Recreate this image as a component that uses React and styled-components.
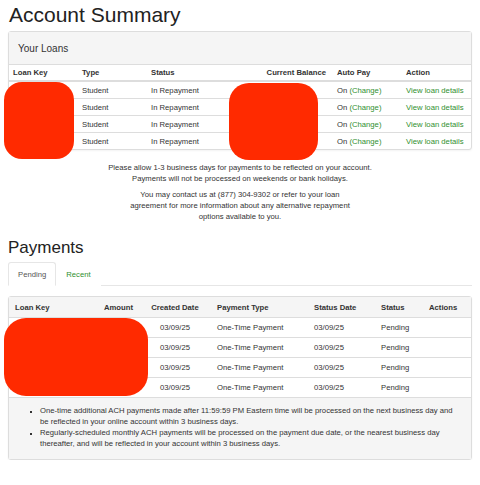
import React from 'react';
import styled, { createGlobalStyle } from 'styled-components';

const GlobalStyle = createGlobalStyle`
  body {
    margin: 0;
    background: #fff;
    font-family: "Liberation Sans", Arial, Helvetica, sans-serif;
    color: #333;
  }
`;

const Page = styled.div`
  width: 464px;
  padding: 3px 8px 0 8px;
`;

const Title = styled.h1`
  margin: 0 0 4px 1px;
  font-size: 21px;
  line-height: 24px;
  font-weight: 400;
  color: #222;
`;

const Panel = styled.div`
  position: relative;
  border: 1px solid #ddd;
  border-radius: 3px;
  background: #fff;
  box-shadow: 0 1px 2px rgba(0, 0, 0, 0.05);
`;

const PanelHeader = styled.div`
  height: 32px;
  display: flex;
  align-items: center;
  padding: 0 9px;
  background: #f5f5f5;
  border-bottom: 1px solid #ddd;
  font-size: 10px;
  color: #333;
`;

const Table = styled.table`
  width: 100%;
  border-collapse: collapse;
  table-layout: fixed;
  font-size: 7.7px;
`;

const Th = styled.th`
  height: ${(p) => p.$h || 15}px;
  padding: 0 ${(p) => p.$pr || 4}px 0 ${(p) => p.$pl || 4}px;
  text-align: ${(p) => p.$align || 'left'};
  font-weight: 700;
  color: #333;
  background: ${(p) => p.$bg || 'transparent'};
  border-bottom: ${(p) => p.$bb || 2}px solid #ddd;
  white-space: nowrap;
`;

const Td = styled.td`
  height: ${(p) => p.$h || 16}px;
  padding: 0 ${(p) => p.$pr || 4}px 0 ${(p) => p.$pl || 4}px;
  text-align: ${(p) => p.$align || 'left'};
  border-top: 1px solid #ddd;
  color: #333;
  white-space: nowrap;
`;

const Link = styled.a`
  color: #2f8f2f;
  text-decoration: none;
  cursor: pointer;
`;

const Note = styled.p`
  margin: ${(p) => p.$mt || 0}px auto 0 auto;
  max-width: ${(p) => p.$w}px;
  text-align: center;
  font-size: 7.7px;
  line-height: 11.3px;
  color: #333;
`;

const Heading = styled.h2`
  margin: 16px 0 4px 0;
  font-size: 17px;
  line-height: 20px;
  font-weight: 400;
  color: #222;
`;

const Tabs = styled.div`
  display: flex;
  border-bottom: 1px solid #e6e6e6;
  margin-bottom: 10px;
`;

const Tab = styled.div`
  height: 22px;
  display: flex;
  align-items: center;
  padding: 0 9px;
  margin-bottom: -1px;
  font-size: 7.7px;
  color: ${(p) => (p.$active ? '#555' : '#2f8f2f')};
  background: #fff;
  border: 1px solid ${(p) => (p.$active ? '#e6e6e6' : 'transparent')};
  border-bottom-color: ${(p) => (p.$active ? '#fff' : 'transparent')};
  border-radius: 3px 3px 0 0;
`;

const Footer = styled.div`
  background: #f5f5f5;
  border-top: 1px solid #ddd;
  padding: 7px 10px 10px 10px;
`;

const Bullets = styled.ul`
  margin: 0;
  padding-left: 21px;
  font-size: 7.7px;
  line-height: 11px;
  color: #333;
  list-style: square;
  li {
    line-height: 11px;
  }
  li::marker {
    font-size: 6px;
  }
`;

const Redact = styled.div`
  position: absolute;
  left: ${(p) => p.$x}px;
  top: ${(p) => p.$y}px;
  width: ${(p) => p.$w}px;
  height: ${(p) => p.$h}px;
  border-radius: ${(p) => p.$r}px;
  background: #ff2a00;
  filter: blur(0.4px);
`;

const loans = [1, 2, 3, 4];
const payments = [1, 2, 3, 4];

export default function App() {
  return (
    <>
      <GlobalStyle />
      <Page>
        <Title>Account Summary</Title>
        <Panel>
          <PanelHeader>Your Loans</PanelHeader>
          <Table>
            <colgroup>
              <col style={{ width: 69 }} />
              <col style={{ width: 69 }} />
              <col style={{ width: 69 }} />
              <col style={{ width: 117 }} />
              <col style={{ width: 69 }} />
              <col />
            </colgroup>
            <thead>
              <tr>
                <Th>Loan Key</Th>
                <Th>Type</Th>
                <Th>Status</Th>
                <Th $align="right" $pr={7}>Current Balance</Th>
                <Th>Auto Pay</Th>
                <Th>Action</Th>
              </tr>
            </thead>
            <tbody>
              {loans.map((n) => (
                <tr key={n}>
                  <Td></Td>
                  <Td>Student</Td>
                  <Td>In Repayment</Td>
                  <Td $align="right" $pr={7}></Td>
                  <Td>
                    On <Link>(Change)</Link>
                  </Td>
                  <Td>
                    <Link>View loan details</Link>
                  </Td>
                </tr>
              ))}
            </tbody>
          </Table>
          <Redact $x={-5} $y={50} $w={70} $h={77} $r={18} />
          <Redact $x={220} $y={51} $w={89} $h={77} $r={20} />
        </Panel>

        <Note $mt={12} $w={300}>
          Please allow 1-3 business days for payments to be reflected on your account.
          <br />
          Payments will not be processed on weekends or bank holidays.
        </Note>
        <Note $mt={4} $w={224}>
          You may contact us at (877) 304-9302 or refer to your loan agreement for more
          information about any alternative repayment options available to you.
        </Note>

        <Heading>Payments</Heading>
        <Tabs>
          <Tab $active>Pending</Tab>
          <Tab>Recent</Tab>
        </Tabs>

        <Panel>
          <Table>
            <colgroup>
              <col style={{ width: 62 }} />
              <col style={{ width: 68 }} />
              <col style={{ width: 72 }} />
              <col style={{ width: 97 }} />
              <col style={{ width: 67 }} />
              <col style={{ width: 48 }} />
              <col />
            </colgroup>
            <thead>
              <tr>
                <Th $h={20} $bb={1} $bg="#f5f5f5" $pl={6}>Loan Key</Th>
                <Th $h={20} $bb={1} $bg="#f5f5f5" $align="right" $pr={6}>Amount</Th>
                <Th $h={20} $bb={1} $bg="#f5f5f5" $align="center" $pl={0} $pr={0}>Created Date</Th>
                <Th $h={20} $bb={1} $bg="#f5f5f5" $pl={6}>Payment Type</Th>
                <Th $h={20} $bb={1} $bg="#f5f5f5" $pl={6}>Status Date</Th>
                <Th $h={20} $bb={1} $bg="#f5f5f5" $pl={6}>Status</Th>
                <Th $h={20} $bb={1} $bg="#f5f5f5" $pl={6}>Actions</Th>
              </tr>
            </thead>
            <tbody>
              {payments.map((n) => (
                <tr key={n}>
                  <Td $h={19} $pl={6}></Td>
                  <Td $h={19} $align="right" $pr={6}></Td>
                  <Td $h={19} $align="center" $pl={0} $pr={0}>03/09/25</Td>
                  <Td $h={19} $pl={6}>One-Time Payment</Td>
                  <Td $h={19} $pl={6}>03/09/25</Td>
                  <Td $h={19} $pl={6}>Pending</Td>
                  <Td $h={19} $pl={6}></Td>
                </tr>
              ))}
            </tbody>
          </Table>
          <Footer>
            <Bullets>
              <li>
                One-time additional ACH payments made after 11:59:59 PM Eastern time will be
                processed on the next business day and be reflected in your online account
                within 3 business days.
              </li>
              <li>
                Regularly-scheduled monthly ACH payments will be processed on the payment due
                date, or the nearest business day thereafter, and will be reflected in your
                account within 3 business days.
              </li>
            </Bullets>
          </Footer>
          <Redact $x={-5} $y={21} $w={144} $h={78} $r={22} />
        </Panel>
      </Page>
    </>
  );
}
